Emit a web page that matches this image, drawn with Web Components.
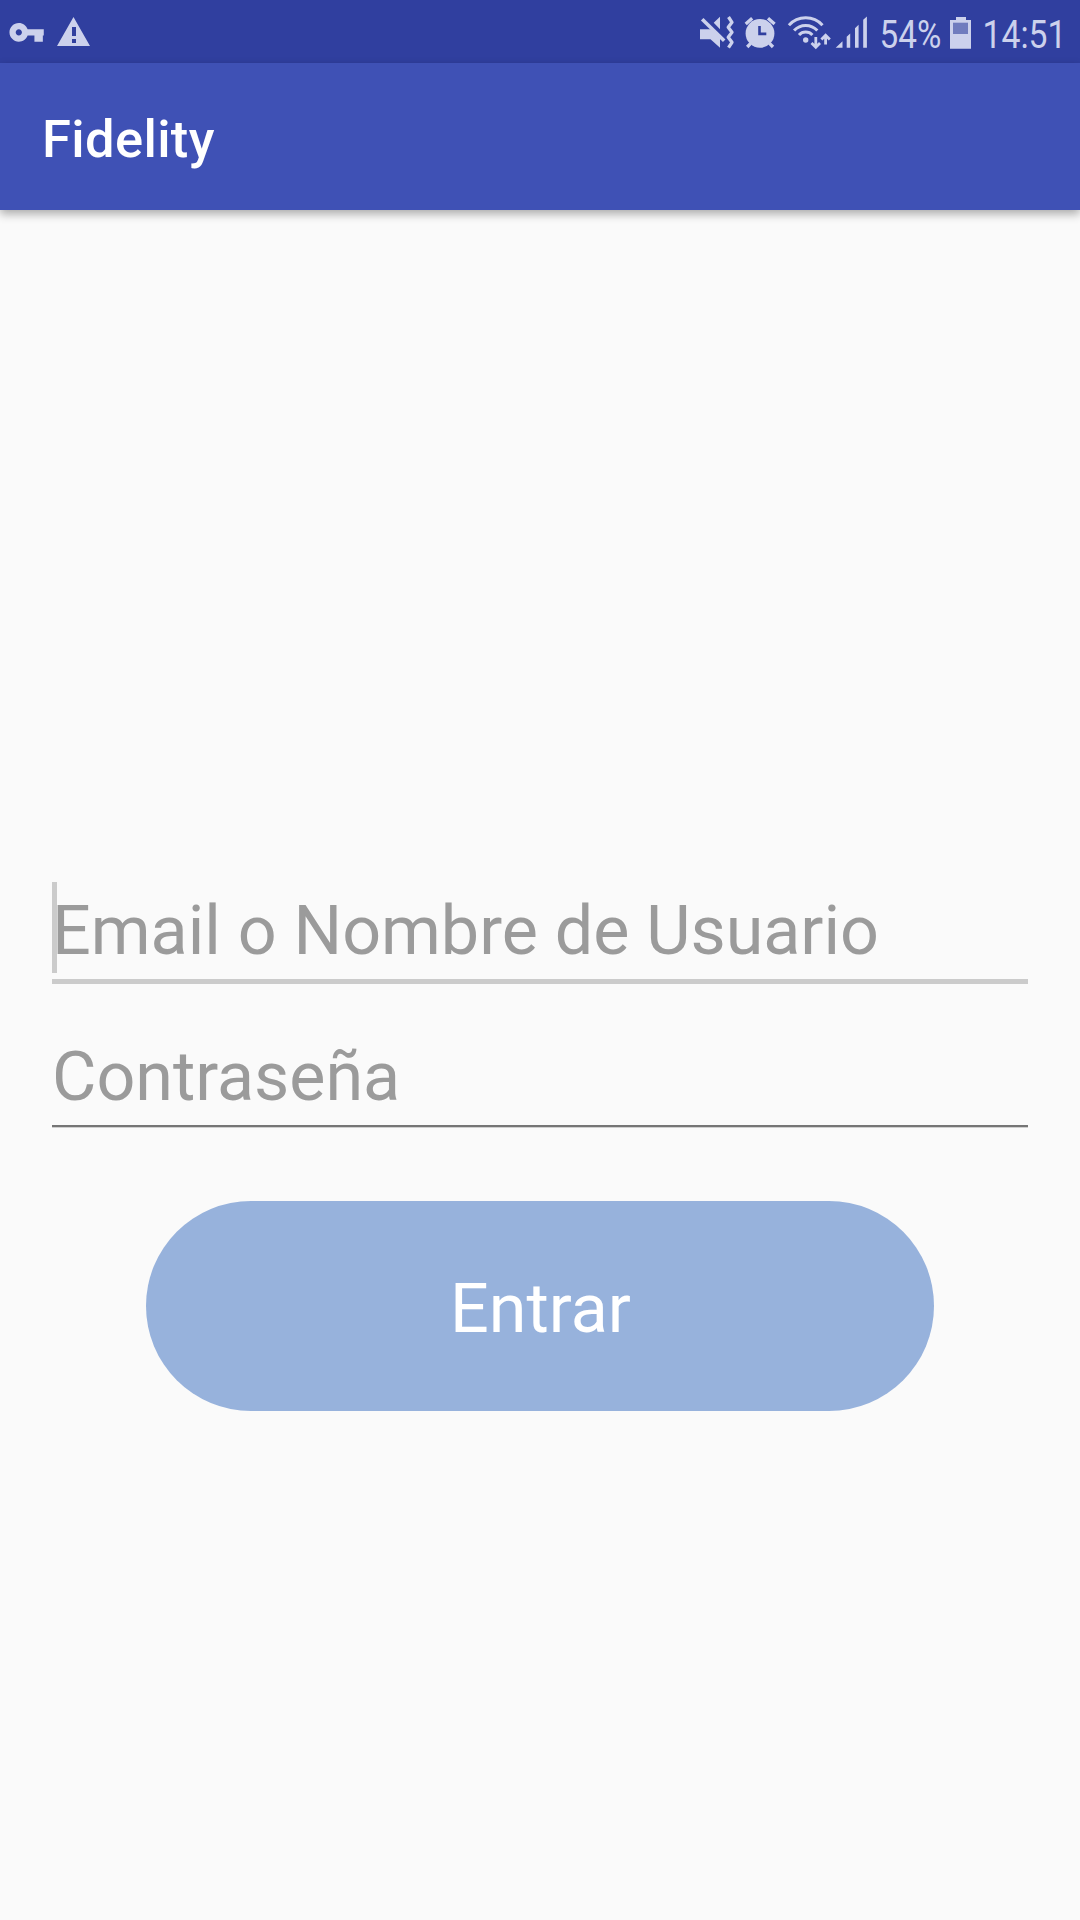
<!DOCTYPE html>
<html lang="es">
<head>
<meta charset="utf-8">
<title>Fidelity</title>
<style>
html,body{margin:0;height:100%;background:#fafafa}
body{font-family:Roboto,"Noto Sans",sans-serif}
</style>
</head>
<body>
<login-screen></login-screen>
<script>
const define = (name, html) => customElements.define(name, class extends HTMLElement {
  constructor() {
    super();
    const t = document.createElement('template');
    t.innerHTML = html;
    this.attachShadow({ mode: 'open' }).append(t.content.cloneNode(true));
  }
});

define('status-bar', `
<style>
:host{display:flex;justify-content:space-between;height:63px;background:#303f9f;color:#ccd1ec;padding:0 12px 0 8px;box-sizing:border-box}
div{display:flex}
svg{display:block;flex:none;height:63px;fill:currentColor;overflow:visible}
.l{fill:none;stroke:currentColor}
.d{fill:none;stroke:#303f9f}
text{font-family:Roboto,sans-serif;font-size:39.4px}
</style>
<div>
  <svg width="44" viewBox="8 0 44 63"><path fill-rule="evenodd" transform="translate(7.9 13.6) scale(1.56)" d="M12.65 10C11.83 7.67 9.61 6 7 6c-3.31 0-6 2.69-6 6s2.69 6 6 6c2.61 0 4.83-1.67 5.65-4H17v4h5.4v-4H23v-4H12.65zM7 14c-1.1 0-2-.9-2-2s.9-2 2-2 2 .9 2 2-.9 2-2 2z"/></svg>
  <svg width="40" viewBox="52 0 40 63"><path fill-rule="evenodd" d="M73.5 17L90 46H57zM72 27v9h4v-9zM72 39v4h4v-4z"/></svg>
</div>
<div>
  <svg width="42" viewBox="698 0 42 63">
    <path d="M700 29.3H712L720 37V47.8L710.5 39.2H700zM720 16.7V29.3L713.7 22.7z"/>
    <path class="l" stroke-width="3.6" d="M702.2 19.2L724.2 40.7"/>
    <path class="l" stroke-width="3.3" stroke-linejoin="round" d="M728.5 17L732 22.3L728.2 27.3L732 32.3L728.2 37.3L732 42.3L728.5 47.7"/>
  </svg>
  <svg width="44" viewBox="740 0 44 63">
    <circle cx="760" cy="33.4" r="14.4"/>
    <path class="l" stroke-width="3.3" d="M745.7 24L752.2 18.2M768 18.2L774.6 24M750.7 43.3L747.2 47M769.5 43.3L773 47"/>
    <path class="d" stroke-width="2.6" d="M759.5 26V33.9H766.3"/>
  </svg>
  <svg width="50" viewBox="784 0 50 63">
    <circle cx="805.7" cy="40" r="2.7"/>
    <path class="l" stroke-width="3" d="M788.9 25.3A22.7 22.7 0 0 1 822.5 25.3M794.1 30.5A15.7 15.7 0 0 1 817.3 30.5M799 35A9 9 0 0 1 812.4 35"/>
    <path class="l" stroke-width="2.8" d="M815.8 37V46.7M811.5 43L815.8 47.2L820 43M825.6 44.5V35.5M821.4 39.5L825.6 35.2L829.8 39.5"/>
  </svg>
  <svg width="42" viewBox="834 0 42 63"><path d="M835.7 47.8L842.5 41.3V47.8zM846.7 47.8V36.7L850.2 33.4V47.8zM855 47.8V28.3L858.6 24.8V47.8zM863.2 47.8V19.7L866.9 16.5V47.8z"/></svg>
  <svg width="72" viewBox="876 0 72 63"><text x="879.6" y="48.4" textLength="61.8" lengthAdjust="spacingAndGlyphs">54%</text></svg>
  <svg width="32" viewBox="948 0 32 63"><path d="M956 17H966V20H971V48.7H950V20H956z"/><path fill="#707cbe" d="M953 22.7h15v11.3h-15z"/></svg>
  <svg width="88" viewBox="980 0 88 63"><text x="982.5" y="48.4" textLength="84" lengthAdjust="spacingAndGlyphs">14:51</text></svg>
</div>`);

define('app-bar', `
<style>
:host{display:flex;align-items:center;height:147px;box-sizing:border-box;padding:5px 42px 0;background:#3f51b5;color:#fff;font-size:52.5px;font-weight:500;letter-spacing:.35px;line-height:62px;box-shadow:0 4px 9px rgba(0,0,0,.32)}
</style><slot></slot>`);

define('text-field', `
<style>
:host{display:block;position:relative;padding-top:4px;height:93px;border-bottom:2px solid #757575;box-shadow:0 1px #cfcfcf;font-size:68.25px;letter-spacing:-.03px;line-height:91px;color:#9b9b9b;white-space:nowrap}
:host([focused]){border-bottom:5px solid #cbcbcb;box-shadow:none}
i{display:none}
:host([focused]) i{display:block;position:absolute;left:0;top:0;width:5px;height:91px;background:#cbcbcb}
</style><slot></slot><i></i>`);

define('pill-button', `
<style>
:host{display:block}
button{display:flex;align-items:center;justify-content:center;width:100%;height:210px;padding:6px 0 0 1px;border:0;border-radius:105px;background:#97b2dc;color:#fff;font:400 68.25px/80px Roboto,sans-serif}
</style><button><slot></slot></button>`);

define('login-screen', `
<style>
:host{display:flex;flex-direction:column;height:1920px;overflow:hidden;background:#fafafa}
main{display:flex;flex-direction:column;padding:672px 52px 0}
text-field+text-field{margin-top:44px}
pill-button{width:788px;align-self:center;margin-top:74px}
</style>
<status-bar></status-bar>
<app-bar>Fidelity</app-bar>
<main>
<text-field focused>Email o Nombre de Usuario</text-field>
<text-field>Contraseña</text-field>
<pill-button>Entrar</pill-button>
</main>`);
</script>
</body>
</html>
